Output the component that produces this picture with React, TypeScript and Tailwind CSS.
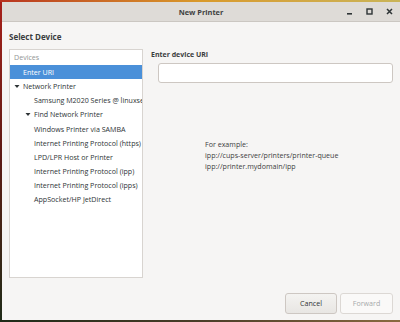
import React from "react";

const rows: { label: string; indent: number; arrow?: boolean; selected?: boolean }[] = [
  { label: "Enter URI", indent: 14, selected: true },
  { label: "Network Printer", indent: 14, arrow: true },
  { label: "Samsung M2020 Series @ linuxserver", indent: 25 },
  { label: "Find Network Printer", indent: 25, arrow: true },
  { label: "Windows Printer via SAMBA", indent: 25 },
  { label: "Internet Printing Protocol (https)", indent: 25 },
  { label: "LPD/LPR Host or Printer", indent: 25 },
  { label: "Internet Printing Protocol (ipp)", indent: 25 },
  { label: "Internet Printing Protocol (ipps)", indent: 25 },
  { label: "AppSocket/HP JetDirect", indent: 25 },
];

function Arrow() {
  return (
    <svg width="6" height="5" viewBox="0 0 6 5" className="shrink-0">
      <path d="M0.5 1 L5.5 1 L3 4 Z" fill="#2e3436" />
    </svg>
  );
}

export default function App() {
  return (
    <div
      className="w-[400px] h-[322px] flex flex-col overflow-hidden bg-[#3a3524]"
      style={{ fontFamily: '"Open Sans", "Noto Sans", sans-serif' }}
    >
      <div className="h-[2px] shrink-0 bg-gradient-to-r from-[#b8321f] via-[#d99a2b] to-[#c9b458]" />
      <div className="flex flex-1 min-h-0">
        <div className="w-[2px] shrink-0 bg-gradient-to-b from-[#a8201a] via-[#5a1a14] to-[#1e2a18]" />
        <div className="flex-1 flex flex-col bg-[#f6f5f4] text-[#2e3436]">
          {/* title bar */}
          <div className="h-[20px] shrink-0 bg-[#dedbd7] border-b border-[#cbc7c2] flex items-center relative">
            <div className="flex-1 text-center font-bold text-[7.4px] leading-[10px] text-[#3d3f40]">New Printer</div>
            <div className="absolute right-[7px] top-0 h-full flex items-center gap-[13px]">
              <svg width="7" height="7" viewBox="0 0 7 7">
                <rect x="1" y="5" width="5" height="1.6" fill="#2e3436" />
              </svg>
              <svg width="7" height="7" viewBox="0 0 7 7">
                <rect x="1" y="1" width="5" height="5" fill="none" stroke="#2e3436" strokeWidth="1.4" />
              </svg>
              <svg width="7" height="7" viewBox="0 0 7 7">
                <path d="M1 1 L6 6 M6 1 L1 6" stroke="#2e3436" strokeWidth="1.5" />
              </svg>
            </div>
          </div>
          {/* content */}
          <div className="flex-1 flex flex-col px-[7px]">
            <div className="pt-[9px] pb-[7px] font-bold text-[8px] leading-[11px] text-[#3a3d3e]">Select Device</div>
            <div className="flex gap-[8px]">
              <div className="w-[134px] h-[229px] shrink-0 bg-white border border-[#d8d4d0] overflow-hidden">
                <div className="h-[15px] flex items-center pl-[4px] text-[7.1px] text-[#929595]">Devices</div>
                {rows.map((r) => (
                  <div
                    key={r.label}
                    className={
                      "h-[14.2px] flex items-center whitespace-nowrap text-[7.1px] " +
                      (r.selected ? "bg-[#4a90d9] text-white" : "text-[#2e3436]")
                    }
                  >
                    <div className="shrink-0 flex items-center justify-end pr-[3px]" style={{ width: r.indent - 1 }}>
                      {r.arrow ? <Arrow /> : null}
                    </div>
                    <span>{r.label}</span>
                  </div>
                ))}
              </div>
              <div className="flex-1 flex flex-col">
                <div className="font-bold text-[7px] leading-[11px] text-[#3a3d3e]">Enter device URI</div>
                <div className="ml-[7px] mt-[3px] h-[20px] bg-white border border-[#cdc7c2] rounded-[3px]" />
                <div className="ml-[54px] mt-[56px] text-[7.1px] leading-[11px] text-[#3d4041]">
                  <div>For example:</div>
                  <div>ipp://cups-server/printers/printer-queue</div>
                  <div>ipp://printer.mydomain/ipp</div>
                </div>
              </div>
            </div>
            <div className="mt-[15px] flex justify-end gap-[3px]">
              <button className="w-[52px] h-[21px] rounded-[3px] border border-[#cdc7c2] bg-gradient-to-b from-[#f4f3f1] to-[#e8e6e3] text-[7.1px] text-[#2e3436]">
                Cancel
              </button>
              <button className="w-[53px] h-[21px] rounded-[3px] border border-[#dcd8d4] bg-[#faf9f8] text-[7.1px] text-[#a7aaab]">
                Forward
              </button>
            </div>
          </div>
        </div>
      </div>
      <div className="h-[2px] shrink-0 bg-gradient-to-r from-[#1e2a18] via-[#4a3d28] to-[#8a6a40]" />
    </div>
  );
}
